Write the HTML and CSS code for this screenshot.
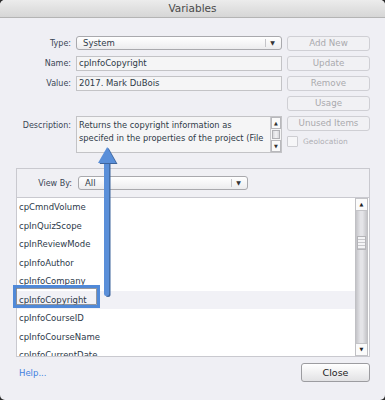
FILE: index.html
```html
<!DOCTYPE html>
<html>
<head>
    <link rel="stylesheet" href="styles.css">
</head>
<body>
<div class="window">
    <div class="titlebar">Variables</div>

    <div class="form">
        <div class="lbl">Type:</div>
        <div class="select"><span class="sel-text">System</span><span class="drop">&#9660;</span></div>
        <div class="btn">Add New</div>

        <div class="lbl">Name:</div>
        <div class="field">cpInfoCopyright</div>
        <div class="btn">Update</div>

        <div class="lbl">Value:</div>
        <div class="field">2017. Mark DuBois</div>
        <div class="btn">Remove</div>

        <div></div>
        <div></div>
        <div class="btn">Usage</div>

        <div class="lbl lbl-top">Description:</div>
        <div class="textarea">
            <div class="ta-text">Returns the copyright information as<br>specifed in the properties of the project (File</div>
            <div class="mini-scroll">
                <div class="mini-arrow">&#9650;</div>
                <div class="mini-thumb"></div>
                <div class="mini-arrow">&#9660;</div>
            </div>
        </div>
        <div class="side-stack">
            <div class="btn">Unused Items</div>
            <div class="check-row"><span class="checkbox"></span>Geolocation</div>
        </div>
    </div>

    <div class="panel">
        <div class="panel-head">
            <div class="lbl view-lbl">View By:</div>
            <div class="select view-select"><span class="sel-text">All</span><span class="drop">&#9660;</span></div>
        </div>
        <div class="list">
            <div class="rows">
                <div class="row">cpCmndVolume</div>
                <div class="row">cpInQuizScope</div>
                <div class="row">cpInReviewMode</div>
                <div class="row">cpInfoAuthor</div>
                <div class="row">cpInfoCompany</div>
                <div class="row row-sel">cpInfoCopyright</div>
                <div class="row">cpInfoCourseID</div>
                <div class="row">cpInfoCourseName</div>
                <div class="row">cpInfoCurrentDate</div>
            </div>
            <div class="scrollbar">
                <div class="sb-arrow">&#9650;</div>
                <div class="sb-track">
                    <div class="sb-thumb"></div>
                </div>
                <div class="sb-arrow">&#9660;</div>
            </div>
        </div>
    </div>

    <div class="footer">
        <a class="help">Help...</a>
        <div class="close-btn">Close</div>
    </div>

    <!-- annotation drawn over the dialog -->
    <svg class="overlay" width="385" height="400" viewBox="0 0 385 400">
        <rect x="15.5" y="287.5" width="84" height="20" fill="none" stroke="#2f4f7a" stroke-width="1" opacity="0.4"/>
        <rect x="14.5" y="286.5" width="84" height="20" fill="none" stroke="#5089d8" stroke-width="3"/>
        <rect x="16.5" y="288.5" width="80" height="16" fill="none" stroke="#7a7f88" stroke-width="0.8"/>
        <rect x="105.5" y="160" width="5" height="137" rx="2.5" fill="#3d649c"/>
        <rect x="104" y="160" width="5.2" height="136" rx="2.5" fill="#5a8fd9"/>
        <polygon points="108.5,148 117.5,164 99.5,164" fill="#3d649c"/>
        <polygon points="107.2,147 116,163 98,163" fill="#5a8fd9"/>
    </svg>
</div>
</body>
</html>
```

FILE: styles.css
```css
 html {
     background-color: #2b2b2b;
 }
 body {
     margin: 0;
     font-family: "DejaVu Sans", Verdana, sans-serif;
     font-size: 8.5px;
     color: #2f3b48;
 }
 .window {
     position: relative;
     width: 385px;
     height: 400px;
     background-color: #efeff4;
     border-radius: 5px;
     overflow: hidden;
 }
 .titlebar {
     height: 17px;
     line-height: 17px;
     text-align: center;
     font-size: 10.5px;
     color: #4a4a4a;
     background: linear-gradient(#ececec, #d6d6d6);
     border-bottom: 1px solid #b4b4b4;
 }

 .form {
     display: grid;
     grid-template-columns: 71px 206px 83px;
     grid-template-rows: 15px 15px 15px 15px 37px;
     column-gap: 5px;
     row-gap: 5px;
     padding-top: 18px;
 }
 .lbl {
     text-align: right;
     line-height: 15px;
     font-size: 8px;
     color: #3a4654;
 }
 .lbl-top {
     padding-top: 2px;
 }
 .select {
     display: flex;
     align-items: center;
     height: 12px;
     border: 1px solid #a9a9ad;
     border-radius: 3px;
     background: linear-gradient(#ffffff, #ececee);
 }
 .sel-text {
     flex: 1;
     padding-left: 6px;
 }
 .drop {
     width: 13px;
     text-align: center;
     font-size: 6px;
     color: #333;
     border-left: 1px solid #c4c4c8;
     line-height: 8px;
     margin-right: 2px;
 }
 .field {
     height: 13px;
     line-height: 13px;
     border: 1px solid #c3c3c6;
     background-color: #f5f5f6;
     padding-left: 2px;
 }
 .btn {
     height: 13px;
     line-height: 13px;
     border: 1px solid #cfcfd4;
     border-radius: 3px;
     background-color: #f1f1f4;
     color: #a9a9ad;
     text-align: center;
     font-size: 8.7px;
 }
 .textarea {
     display: flex;
     border: 1px solid #c3c3c6;
     background-color: #f5f5f6;
 }
 .ta-text {
     flex: 1;
     padding: 2px 2px;
     line-height: 12.5px;
     font-size: 8.3px;
     white-space: nowrap;
     overflow: hidden;
 }
 .mini-scroll {
     display: flex;
     flex-direction: column;
     width: 10px;
     border-left: 1px solid #c8c8cc;
 }
 .mini-arrow {
     height: 10px;
     line-height: 10px;
     text-align: center;
     font-size: 5px;
     background: #fafafa;
     border: 1px solid #b8b8bc;
     color: #333;
 }
 .mini-thumb {
     flex: 1;
     margin: 1px 1px;
     background: linear-gradient(90deg, #d8d8dc, #f2f2f4, #d8d8dc);
     border: 1px solid #b0b0b4;
 }
 .side-stack {
     display: flex;
     flex-direction: column;
     gap: 5px;
 }
 .check-row {
     display: flex;
     align-items: center;
     gap: 5px;
     color: #b0b0b4;
     font-size: 7.5px;
 }
 .checkbox {
     width: 9px;
     height: 9px;
     border: 1px solid #cdcdd2;
     background-color: #f6f6f8;
     border-radius: 1px;
 }

 .panel {
     margin: 15px 15px 0 16px;
     border: 1px solid #c9c9cf;
     background-color: #f0f0f4;
 }
 .panel-head {
     display: flex;
     align-items: center;
     height: 28px;
     gap: 6px;
 }
 .view-lbl {
     width: 55px;
 }
 .view-select {
     width: 168px;
 }
 .list {
     display: flex;
     height: 158px;
     background-color: #ffffff;
     border-top: 1px solid #c9c9cf;
 }
 .rows {
     flex: 1;
     overflow: hidden;
 }
 .row {
     height: 18.5px;
     line-height: 18.5px;
     padding-left: 2px;
     color: #2d3a4a;
 }
 .row-sel {
     background-color: #f1f1f6;
 }
 .scrollbar {
     display: flex;
     flex-direction: column;
     width: 11px;
     margin-right: 1px;
     border-left: 1px solid #c0c0c4;
     border-right: 1px solid #c0c0c4;
 }
 .sb-arrow {
     height: 11px;
     line-height: 11px;
     text-align: center;
     font-size: 5px;
     color: #222;
     background: #fbfbfb;
     border-top: 1px solid #c4c4c8;
     border-bottom: 1px solid #c4c4c8;
 }
 .sb-track {
     flex: 1;
     padding-top: 25px;
     background: linear-gradient(90deg, #c4c4c8, #e4e4e8 40%, #e4e4e8 60%, #c4c4c8);
 }
 .sb-thumb {
     height: 12px;
     margin: 0 1px;
     border: 1px solid #b4b4b8;
     background: repeating-linear-gradient(#f4f4f6 0, #f4f4f6 2px, #c8c8cc 2px, #c8c8cc 3px);
 }

 .footer {
     display: flex;
     justify-content: space-between;
     align-items: center;
     margin-top: 6px;
     padding: 0 15px 0 19px;
 }
 .help {
     color: #3f7fe0;
     font-size: 8.5px;
 }
 .close-btn {
     width: 67px;
     height: 17px;
     line-height: 17px;
     text-align: center;
     font-size: 9.5px;
     color: #222;
     border: 1px solid #9c9ca0;
     border-radius: 3px;
     background: linear-gradient(#ffffff, #e2e2e4);
 }
 .overlay {
     position: absolute;
     left: 0;
     top: 0;
     pointer-events: none;
 }
```
